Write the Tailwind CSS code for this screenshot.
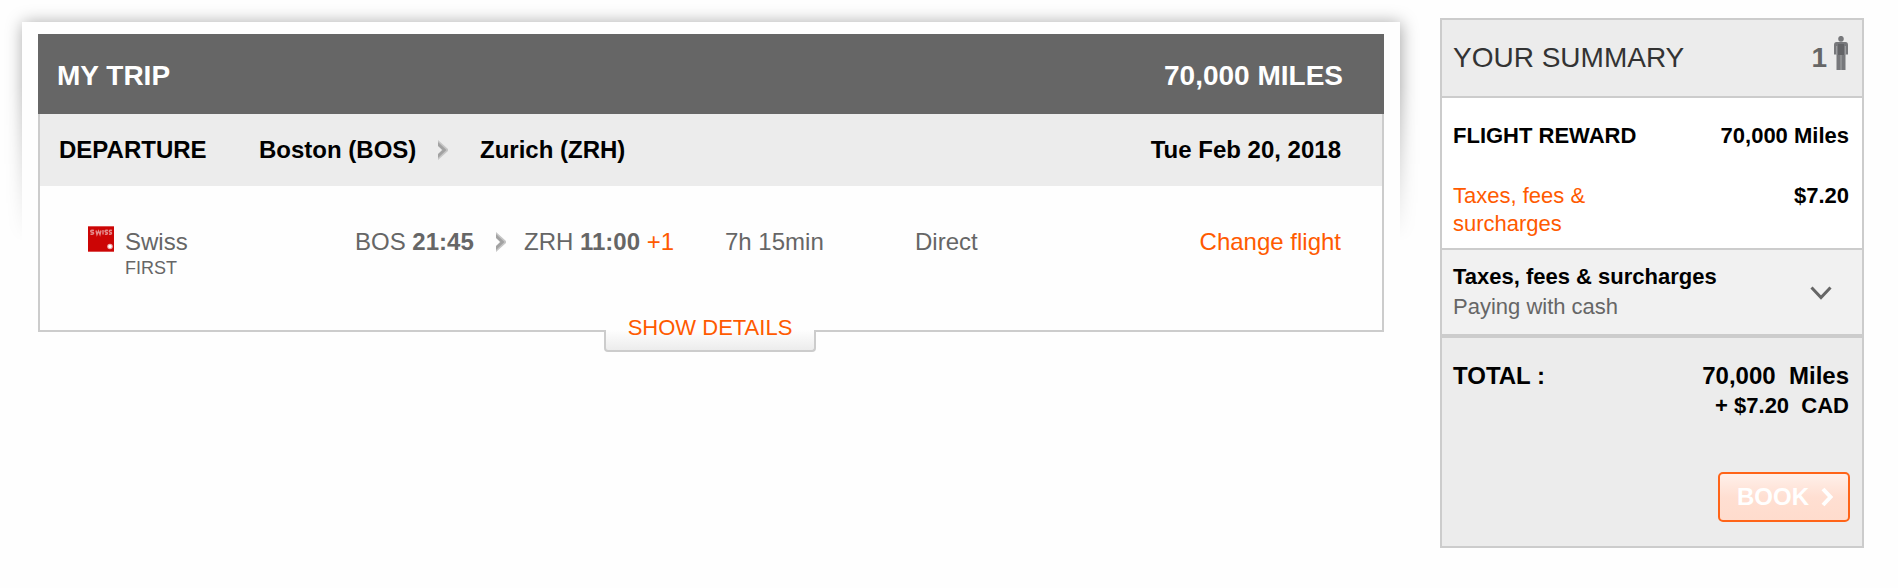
<!DOCTYPE html>
<html lang="en">
<head>
<meta charset="utf-8">
<title>My trip</title>
<script src="https://cdn.jsdelivr.net/npm/@tailwindcss/browser@4"></script>
</head>
<body class="bg-[#fefefe] font-['Liberation_Sans',Arial,sans-serif] text-black">
<svg class="hidden" aria-hidden="true">
  <symbol id="arrow" viewBox="0 0 10 20">
    <path d="M0 0 10 9V11L0 20V14.500L4 10 0 5.500Z" fill="#c6c6c6"/>
    <path d="M0 2 8.500 10 0 18V14L4.500 10 0 6Z" fill="#a2a2a2"/>
  </symbol>
</svg>
<div class="flex items-start gap-10 pr-[34px] pl-[22px] pt-[18px]">
  <main class="relative mt-1 min-w-0 flex-1 px-4 pt-3">
    <!-- Shadow around the card that fades out downwards -->
    <div class="pointer-events-none absolute -inset-x-5 -top-5 h-[240px] overflow-hidden px-5 pt-5 [mask-image:linear-gradient(to_bottom,#000_35%,transparent)]" aria-hidden="true">
      <div class="h-[300px] bg-[#fefefe] shadow-[1px_1px_16px_rgba(0,0,0,0.36)]"></div>
    </div>

    <section class="relative">
      <header class="flex h-20 items-center justify-between bg-[#666] pt-1 pr-[41px] pl-[19px] text-[28px] leading-8 font-bold text-white">
        <h1>MY TRIP</h1>
        <p>70,000 MILES</p>
      </header>
      <div class="border-2 border-t-0 border-[#ccc] bg-[#fefefe]">
        <div class="grid h-[72px] grid-cols-[200px_179px_42px_1fr_auto] items-center bg-[#ececec] pr-[41px] pl-[19px] text-2xl leading-7 font-bold">
          <h2>DEPARTURE</h2>
          <span>Boston (BOS)</span>
          <svg class="h-5 w-[10px]" aria-hidden="true"><use href="#arrow"/></svg>
          <span>Zurich (ZRH)</span>
          <span>Tue Feb 20, 2018</span>
        </div>
        <div class="grid h-[144px] grid-cols-[267px_141px_28px_201px_190px_1fr] items-start pt-[42px] pr-[41px] pl-12 text-2xl leading-7 text-[#666]">
          <div class="flex items-start gap-[11px]">
            <svg class="-mt-0.5 size-[26px]" viewBox="0 0 26 26" role="img" aria-label="Swiss logo">
              <path d="M0 0H26V26H0Z" fill="#cc0505"/>
              <path d="M0 .5H26M0 25.500H26" stroke="#dd5050"/>
              <path d="M6 4.500C2 3.500 2 6 4 6.200 7 6.500 5.500 9 2.500 8M8 4.500 9 8.500 10.500 5 12 8.500 13 4.500M15 4V8.500M20 4.500C16.500 3.500 16.500 6 18 6.200 20.500 6.500 19.500 9 17 8M24 4.500C20.500 3.500 21 6 22.200 6.200 24.500 6.500 23.500 9 21 8" fill="none" stroke="#e58a8a" stroke-width="1.400"/>
              <circle cx="22" cy="20.500" r="2.800" fill="#f0a8a8"/>
              <circle cx="22" cy="20.500" r="1.700" fill="#fff"/>
            </svg>
            <div>
              <p>Swiss</p>
              <p class="text-lg leading-6">FIRST</p>
            </div>
          </div>
          <p>BOS <b>21:45</b></p>
          <svg class="mt-1 h-5 w-[10px]" aria-hidden="true"><use href="#arrow"/></svg>
          <p>ZRH <b>11:00</b> <span class="text-[#ff5a00]">+1</span></p>
          <p>7h 15min</p>
          <div class="flex justify-between"><p>Direct</p><a href="#" class="text-[#ff5a00]">Change flight</a></div>
        </div>
      </div>
      <!-- Tab straddling the card's bottom border -->
      <div class="absolute inset-x-0 -bottom-5 flex justify-center pr-0.5">
        <button type="button" class="relative h-12 w-[212px] bg-[#fefefe] text-[22px] leading-6 text-[#ff5a00]">
          <span class="absolute inset-x-0 bottom-0 h-[22px] rounded-b-[4px] border-2 border-t-0 border-[#ccc] bg-linear-to-b from-[#fefefe] to-[#ececec]"></span>
          <span class="relative">SHOW DETAILS</span>
        </button>
      </div>
    </section>
  </main>

  <aside class="w-[424px] shrink-0 border-2 border-[#ccc] bg-[#ececec] text-[22px] leading-7">
    <header class="flex h-[78px] items-center justify-between border-b-2 border-[#ccc] pr-[14px] pl-[11px] text-[28px] leading-8 text-[#333]">
      <h2>YOUR SUMMARY</h2>
      <div class="flex items-center gap-[7px]">
        <b class="text-[#666]">1</b>
        <svg class="-mt-[10px] h-[34px] w-[14px]" viewBox="0 0 14 34" role="img" aria-label="passenger">
          <ellipse cx="7" cy="2.800" rx="2.800" ry="2.900" fill="#77787b"/>
          <path d="M2.500 6H11.500Q14 6 14 9V18.500H11.500V34H2.500V18.500H0V9Q0 6 2.500 6Z" fill="#77787b"/>
          <path d="M2.700 10V19M11.300 10V19M7 19V34" stroke="#a6a7a9" stroke-width="1"/>
          <path d="M4 8H10V19H4Z" fill="#636467"/>
        </svg>
      </div>
    </header>
    <div class="flex flex-col gap-8 border-b-2 border-[#ccc] bg-white pt-6 pr-[13px] pb-[10px] pl-[11px]">
      <div class="flex justify-between font-bold"><h3>FLIGHT REWARD</h3><span>70,000 Miles</span></div>
      <div class="flex items-start justify-between"><a href="#" class="w-[180px] text-[#ff5a00]">Taxes, fees &amp; surcharges</a><b>$7.20</b></div>
    </div>
    <button type="button" class="flex w-full items-center justify-between border-b-4 border-[#ccc] bg-[#f1f1f1] py-3 pr-[30px] pl-[11px] text-left leading-[30px]">
      <span><b class="block">Taxes, fees &amp; surcharges</b><span class="block text-[#666]">Paying with cash</span></span>
      <svg class="mt-0.5 h-[14px] w-[22px]" viewBox="0 0 22 14" fill="none" stroke="#666" stroke-width="3" aria-hidden="true"><path d="M1.500 1.500 11 11.500 20.500 1.500"/></svg>
    </button>
    <div class="pt-[23px] pb-6">
      <div class="flex justify-between pr-[13px] pl-[11px] leading-[30px] font-bold">
        <h3 class="text-2xl leading-[30px]">TOTAL :</h3>
        <div class="text-right"><p class="text-2xl leading-[30px]">70,000&nbsp; Miles</p><p>+ $7.20&nbsp; CAD</p></div>
      </div>
      <div class="mt-[51px] flex justify-end pr-3">
        <button type="button" class="flex h-[50px] w-[132px] items-center justify-between rounded-[5px] border-2 border-[#ff6418] bg-linear-to-b from-[#fff0ea] via-[#ffdfd2] to-[#ffdccd] pr-[14px] pl-[17px] text-2xl leading-7 font-bold text-white">
          BOOK
          <svg class="h-5 w-[14px]" viewBox="0 0 14 20" fill="none" stroke="#fff" stroke-width="4" aria-hidden="true"><path d="M3 2 10.500 10 3 18"/></svg>
        </button>
      </div>
    </div>
  </aside>
</div>
</body>
</html>
